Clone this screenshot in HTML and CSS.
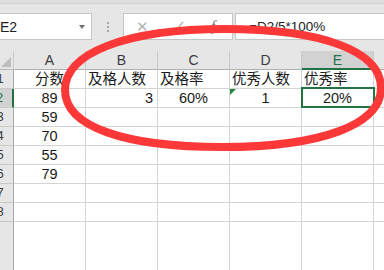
FILE: index.html
```html
<!DOCTYPE html>
<html lang="zh-CN">
<head>
<meta charset="utf-8">
<title>Sheet</title>
<link rel="stylesheet" href="styles.css">
</head>
<body>
<div class="app">
  <div class="ribbon-edge"></div>
  <div class="fbar">
    <div class="namebox"><span class="nb-text">E2</span><span class="nb-arrow"></span></div>
    <div class="sep"><i></i><i></i><i></i></div>
    <div class="fbtns">
      <span class="fb fb-x">✕</span>
      <span class="fb fb-ok">✓</span>
      <span class="fb fb-fx">f<small>x</small></span>
    </div>
    <div class="finput">=D2/5*100%</div>
  </div>
  <div class="sheet">
    <div class="corner"><span class="tri"></span></div>
    <div class="ch">A</div><div class="ch">B</div><div class="ch">C</div><div class="ch">D</div><div class="ch sel">E</div><div class="ch"></div>

    <div class="rh">1</div>
    <div class="c ctr">分数</div><div class="c">及格人数</div><div class="c">及格率</div><div class="c">优秀人数</div><div class="c">优秀率</div><div class="c"></div>

    <div class="rh sel">2</div>
    <div class="c ctr">89</div><div class="c rt">3</div><div class="c ctr">60%</div><div class="c ctr warn">1</div><div class="c ctr active">20%</div><div class="c"></div>

    <div class="rh">3</div>
    <div class="c ctr">59</div><div class="c"></div><div class="c"></div><div class="c"></div><div class="c"></div><div class="c"></div>

    <div class="rh">4</div>
    <div class="c ctr">70</div><div class="c"></div><div class="c"></div><div class="c"></div><div class="c"></div><div class="c"></div>

    <div class="rh">5</div>
    <div class="c ctr">55</div><div class="c"></div><div class="c"></div><div class="c"></div><div class="c"></div><div class="c"></div>

    <div class="rh">6</div>
    <div class="c ctr">79</div><div class="c"></div><div class="c"></div><div class="c"></div><div class="c"></div><div class="c"></div>

    <div class="rh">7</div>
    <div class="c"></div><div class="c"></div><div class="c"></div><div class="c"></div><div class="c"></div><div class="c"></div>

    <div class="rh">8</div>
    <div class="c"></div><div class="c"></div><div class="c"></div><div class="c"></div><div class="c"></div><div class="c"></div>

    <div class="rh fill"></div>
    <div class="c fill"></div><div class="c fill"></div><div class="c fill"></div><div class="c fill"></div><div class="c fill"></div><div class="c fill"></div>
  </div>
  <svg class="mark" width="384" height="270" viewBox="0 0 384 270">
    <path d="M65 90 C65 53 126 29 225 29 C322 29 381 51 381 88 C381 125 321 147 222 147 C125 147 65 127 65 90 Z" fill="none" stroke="#fd3838" stroke-width="8"/>
  </svg>
</div>
</body>
</html>
```
FILE: styles.css
```css
* { box-sizing: border-box; }
html, body { margin: 0; padding: 0; }
body { background: #fff; font-family: "Liberation Sans", "Noto Sans CJK SC", sans-serif; }

.app {
  position: relative;
  width: 384px;
  height: 270px;
  overflow: hidden;
  background: #e6e6e6;
}

.ribbon-edge {
  height: 4px;
  background: #dedede;
  border-bottom: 1px solid #d2d2d2;
}

.fbar {
  display: flex;
  align-items: stretch;
  height: 27px;
  margin-top: 9px;
  margin-left: -4px;
}

.namebox {
  width: 96px;
  background: #fff;
  border: 1px solid #c6c6c6;
  display: flex;
  align-items: center;
  justify-content: space-between;
  padding: 0 6px 0 3px;
}
.nb-text { font-size: 14px; color: #1e1e1e; }
.nb-arrow {
  width: 0; height: 0;
  border-left: 3.5px solid transparent;
  border-right: 3.5px solid transparent;
  border-top: 4px solid #707070;
  margin-top: 1px;
}

.sep {
  width: 31px;
  display: flex;
  flex-direction: column;
  align-items: center;
  justify-content: center;
  gap: 2px;
}
.sep i { display: block; width: 2px; height: 2px; background: #a6a6a6; }

.fbtns {
  width: 110px;
  background: #fff;
  border: 1px solid #c6c6c6;
  display: flex;
  align-items: center;
  padding-left: 12px;
  gap: 0;
}
.fb { color: #b4b4b4; font-size: 15px; font-family: "DejaVu Sans", sans-serif; }
.fb-x { width: 37px; }
.fb-ok { width: 38px; font-size: 16px; }
.fb-fx {
  font-family: "Liberation Serif", serif;
  font-style: italic;
  color: #6a6a6a;
  font-size: 15px;
}
.fb-fx small { font-size: 10px; }

.finput {
  flex: 1;
  margin-left: 2px;
  background: #fff;
  border: 1px solid #c6c6c6;
  border-right: none;
  display: flex;
  align-items: center;
  padding-left: 13px;
  font-size: 13.5px;
  color: #222;
}

.sheet {
  margin-top: 11px;
  margin-left: -13px;
  display: grid;
  grid-template-columns: 27px repeat(6, 72px);
  grid-template-rows: 19px repeat(8, 19px) 60px;
  background: #fff;
  font-size: 14.5px;
  color: #1a1a1a;
}

.corner {
  background: #e6e6e6;
  border-right: 1px solid #c8c8c8;
  border-bottom: 1px solid #b8b8b8;
  position: relative;
}
.tri {
  position: absolute;
  right: 2px;
  bottom: 2px;
  width: 0; height: 0;
  border-left: 10px solid transparent;
  border-bottom: 10px solid #bdbdbd;
}

.ch {
  background: #e6e6e6;
  border-right: 1px solid #c8c8c8;
  border-bottom: 1px solid #b0b0b0;
  text-align: center;
  line-height: 18px;
  font-size: 14px;
  color: #3b3b3b;
}
.ch.sel {
  background: #d2d2d2;
  color: #217346;
  border-bottom: 2px solid #217346;
}

.rh {
  background: #e6e6e6;
  border-right: 1px solid #a8a8a8;
  border-bottom: 1px solid #c8c8c8;
  text-align: center;
  font-size: 13px;
  line-height: 18px;
  color: #3b3b3b;
}
.rh.sel {
  background: #d2d2d2;
  color: #217346;
  border-right: 2px solid #217346;
}
.rh.fill { border-bottom: none; }

.c {
  border-right: 1px solid #d4d4d4;
  border-bottom: 1px solid #d4d4d4;
  line-height: 18px;
  padding: 0 2px;
  white-space: nowrap;
  position: relative;
}
.c.fill { border-bottom: none; }
.ctr { text-align: center; }
.rt { text-align: right; padding-right: 4px; }

.warn::before {
  content: "";
  position: absolute;
  left: 0; top: 0;
  width: 0; height: 0;
  border-top: 6px solid #1e8a3a;
  border-right: 6px solid transparent;
}

.active::after {
  content: "";
  position: absolute;
  left: -1px; top: -2px; right: -2px; bottom: -1px;
  border: 2px solid #217346;
}

.mark {
  position: absolute;
  left: 0; top: 0;
  pointer-events: none;
}
```
